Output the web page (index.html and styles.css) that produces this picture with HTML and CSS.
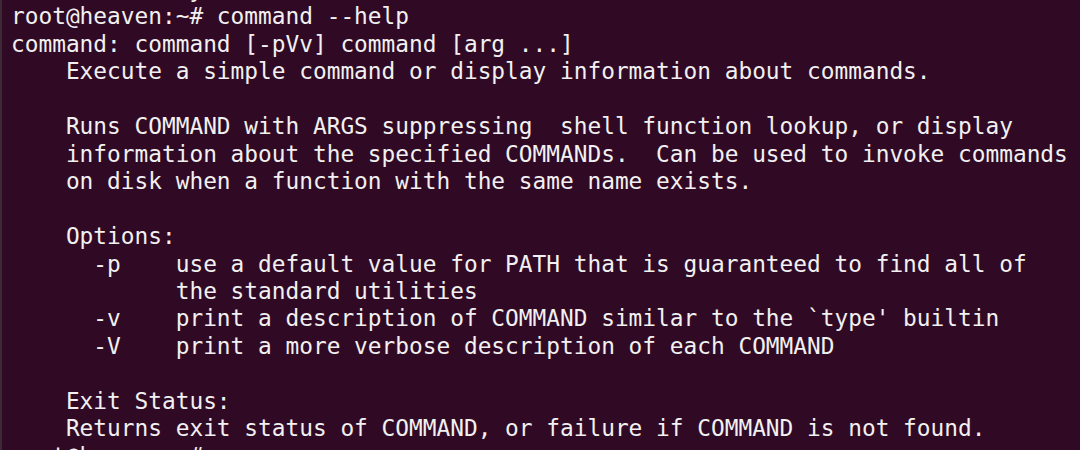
FILE: index.html
```html
<!DOCTYPE html>
<html>
<head>
<meta charset="utf-8">
<link rel="stylesheet" href="styles.css">
</head>
<body>
<div class="terminal">
<pre class="screen">             y
root@heaven:~# command --help
command: command [-pVv] command [arg ...]
    Execute a simple command or display information about commands.

    Runs COMMAND with ARGS suppressing  shell function lookup, or display
    information about the specified COMMANDs.  Can be used to invoke commands
    on disk when a function with the same name exists.

    Options:
      -p    use a default value for PATH that is guaranteed to find all of
            the standard utilities
      -v    print a description of COMMAND similar to the `type' builtin
      -V    print a more verbose description of each COMMAND

    Exit Status:
    Returns exit status of COMMAND, or failure if COMMAND is not found.
root@heaven:~# </pre>
</div>
</body>
</html>
```
FILE: styles.css
```css
html, body {
  margin: 0;
  padding: 0;
  background: #300a24;
  overflow: hidden;
}

.terminal {
  width: 1080px;
  height: 450px;
  background: #300a24;
  border-left: 2px solid #3c2a36;
  box-sizing: border-box;
  overflow: hidden;
}

.screen {
  margin: -24px 0 0 0;
  padding: 0 0 0 9px;
  font-family: "DejaVu Sans Mono", "Liberation Mono", monospace;
  font-size: 22.8px;
  line-height: 27.46px;
  color: #f2f0f1;
  white-space: pre;
}
```
